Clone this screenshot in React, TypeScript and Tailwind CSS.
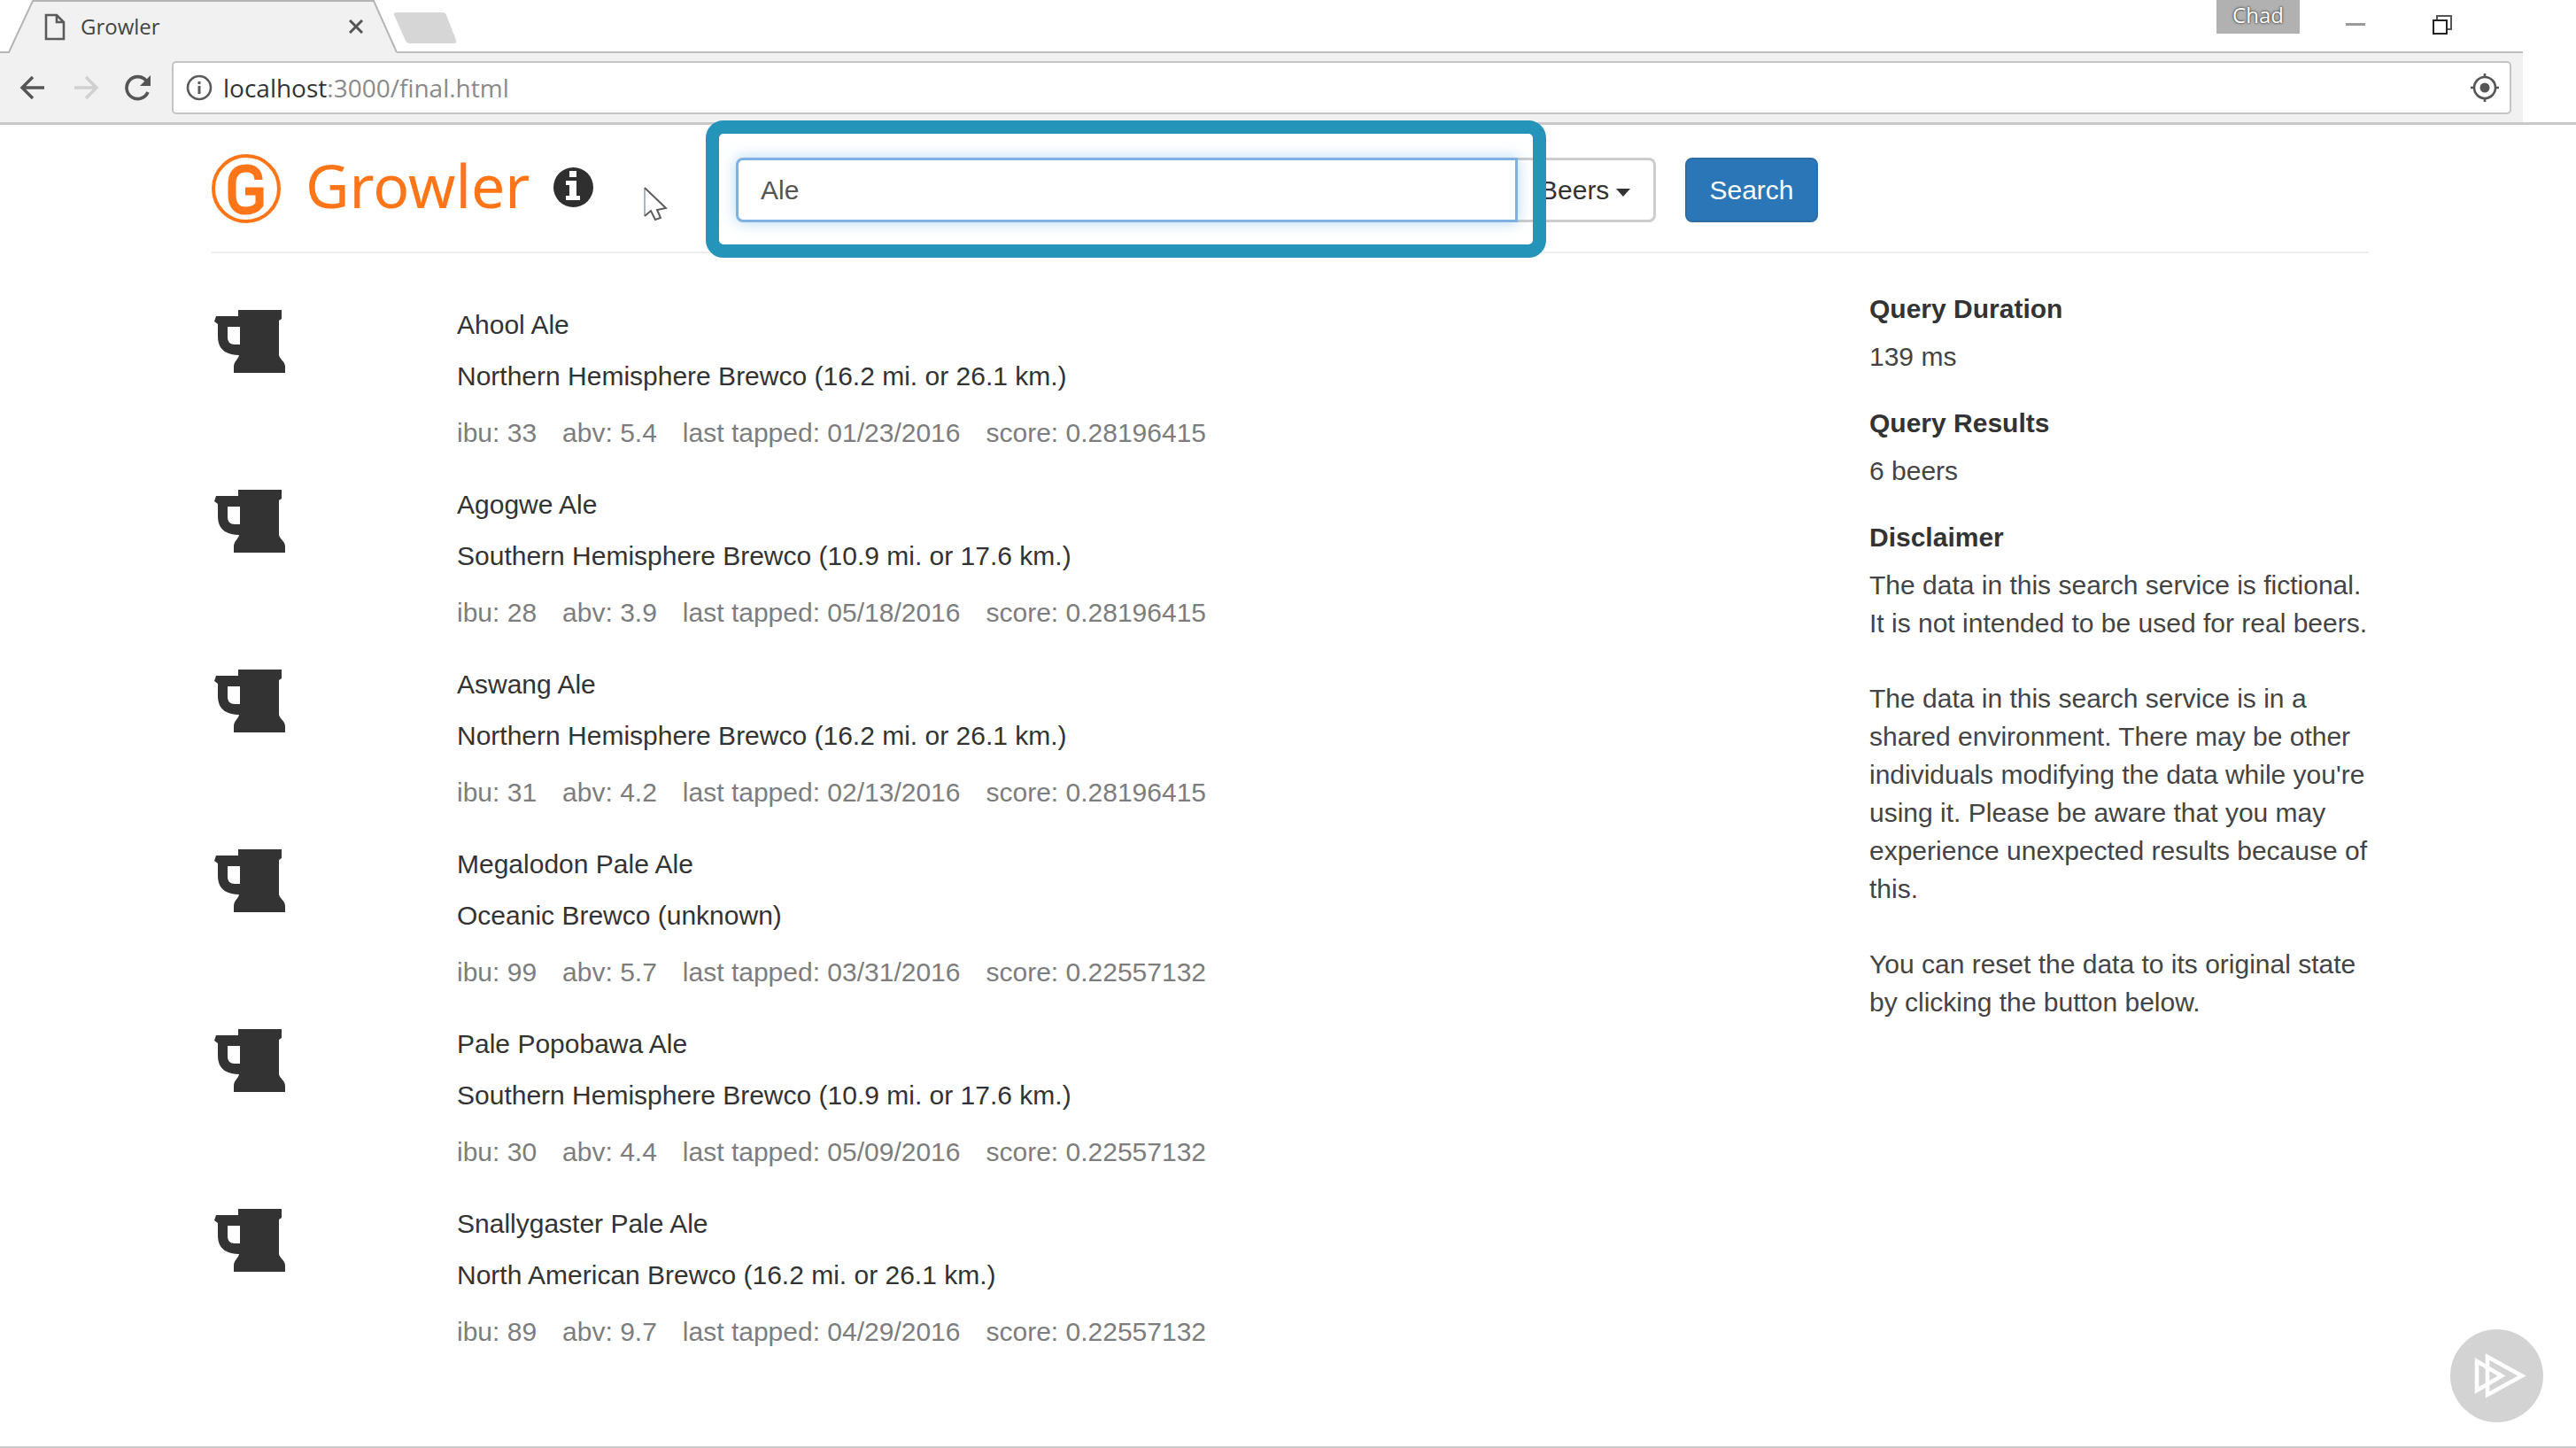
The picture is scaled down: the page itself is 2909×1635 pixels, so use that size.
import { useState } from "react";

type Beer = {
  name: string;
  brewer: string;
  ibu: number;
  abv: string;
  tapped: string;
  score: string;
};

const beers: Beer[] = [
  { name: "Ahool Ale", brewer: "Northern Hemisphere Brewco (16.2 mi. or 26.1 km.)", ibu: 33, abv: "5.4", tapped: "01/23/2016", score: "0.28196415" },
  { name: "Agogwe Ale", brewer: "Southern Hemisphere Brewco (10.9 mi. or 17.6 km.)", ibu: 28, abv: "3.9", tapped: "05/18/2016", score: "0.28196415" },
  { name: "Aswang Ale", brewer: "Northern Hemisphere Brewco (16.2 mi. or 26.1 km.)", ibu: 31, abv: "4.2", tapped: "02/13/2016", score: "0.28196415" },
  { name: "Megalodon Pale Ale", brewer: "Oceanic Brewco (unknown)", ibu: 99, abv: "5.7", tapped: "03/31/2016", score: "0.22557132" },
  { name: "Pale Popobawa Ale", brewer: "Southern Hemisphere Brewco (10.9 mi. or 17.6 km.)", ibu: 30, abv: "4.4", tapped: "05/09/2016", score: "0.22557132" },
  { name: "Snallygaster Pale Ale", brewer: "North American Brewco (16.2 mi. or 26.1 km.)", ibu: 89, abv: "9.7", tapped: "04/29/2016", score: "0.22557132" },
];

function MugIcon() {
  return (
    <svg viewBox="0 0 81 71" className="h-[71px] w-[81px] text-[#333]" fill="currentColor" aria-hidden="true">
      <path
        fillRule="evenodd"
        d="M27 0H76V10L73 12V51C74 56 80 58 80 64V71H22V64C22 58 27 56 28 51C14 51 4 45 4 30V16L0 13L2 7H27ZM15 19V31C15 36 18 39 23 39H29V19Z"
      />
    </svg>
  );
}

function LogoMark() {
  return (
    <svg viewBox="0 0 78 78" className="size-[78px] text-[#ff7518]" fill="none" stroke="currentColor" aria-hidden="true">
      <circle cx="39" cy="39" r="37" strokeWidth="4" />
      <path
        d="M53 29C53 20 47 16 39 16C28 16 23 23 23 33V46C23 57 28 64 38 64C46 64 51 61 54 57V42H38"
        strokeWidth="9"
      />
    </svg>
  );
}

function InfoIcon() {
  return (
    <svg viewBox="0 0 45 45" className="size-[45px]" aria-hidden="true">
      <circle cx="22.5" cy="22.5" r="22.5" fill="#2f2f2f" />
      <path d="M18 4H26V11H18ZM14 15H26V32H30V37H14V32H18V20H14Z" fill="#fff" />
    </svg>
  );
}

function Pointer() {
  return (
    <svg viewBox="0 0 28 40" className="mt-9 ml-14 h-10 w-7" aria-hidden="true">
      <path d="M2 2V34L9 28L14 38L20 36L16 27L26 25Z" fill="#fff" />
      <path d="M2 34V2" stroke="#a9b4c4" strokeWidth="2" />
      <path d="M2 2L26 25L16 27L20 36L14 38L9 28L2 34" fill="none" stroke="#5c5c5c" strokeWidth="2" />
    </svg>
  );
}

function TabStrip() {
  return (
    <div className="flex h-[60px] items-start pr-[60px]">
      <div className="relative h-[60px] w-[448px] shrink-0">
        <svg viewBox="0 0 448 60" className="absolute inset-0 h-[60px] w-[448px]" aria-hidden="true">
          <path d="M0 59H10L37 1H422L448 59V60H0Z" fill="#f1f1f1" />
          <path d="M0 0H37L10 59H0Z" fill="#fff" />
          <path d="M0 59H10L37 1H422L448 59" fill="none" stroke="#b5b5b5" strokeWidth="2" />
        </svg>
        <div className="relative flex h-[60px] items-center pl-[50px]">
          <svg viewBox="0 0 24 31" className="h-[31px] w-6" fill="none" stroke="#5a5a5a" strokeWidth="2.6" aria-hidden="true">
            <path d="M2 2H14L22 10V29H2ZM14 2V10H22" />
          </svg>
          <span className="ml-[17px] font-['Open_Sans',sans-serif] text-[24px] text-[#444]">Growler</span>
          <button type="button" aria-label="Close tab" className="ml-auto mr-[38px]">
            <svg viewBox="0 0 16 16" className="size-4" stroke="#555" strokeWidth="3" aria-hidden="true">
              <path d="M1 1L15 15M15 1L1 15" />
            </svg>
          </button>
        </div>
      </div>
      <div className="flex h-[60px] flex-1 items-start border-b-2 border-[#bdbdbd]">
        <button type="button" aria-label="New tab" className="-ml-1 mt-[14px]">
          <svg viewBox="0 0 72 36" className="h-9 w-[72px]" aria-hidden="true">
            <path d="M3 0H55Q59 0 60 3L71 31Q72 35 68 35H19Q15 35 14 32L1 3Q0 0 3 0Z" fill="#d6d6d6" />
          </svg>
        </button>
        <div className="ml-auto flex items-start pr-[79px]">
          <button
            type="button"
            className="h-[38px] w-[94px] bg-[#b1b1b1] pb-1 font-['Open_Sans',sans-serif] text-[24px] leading-[34px] text-white [text-shadow:0_0_3px_#333,0_0_2px_#555]"
          >
            Chad
          </button>
          <button type="button" aria-label="Minimize" className="mt-[26px] ml-[52px] h-[3px] w-[22px] bg-[#999]" />
          <button type="button" aria-label="Restore" className="mt-[16px] ml-[75px]">
            <svg viewBox="0 0 24 24" className="size-6" fill="none" aria-hidden="true">
              <path d="M6 6V2H22V17H17" stroke="#555" strokeWidth="2" />
              <path d="M2 7H17V22H2Z" stroke="#222" strokeWidth="2" />
            </svg>
          </button>
        </div>
      </div>
    </div>
  );
}

function Toolbar() {
  return (
    <div className="border-b-[3px] border-[#c9c9c9]">
      <div className="mr-[60px] flex h-[78px] items-center bg-[#f1f1f1] pr-[13px] pl-[22px]">
        <button type="button" aria-label="Back">
          <svg viewBox="0 0 30 28" className="h-7 w-[30px]" fill="none" stroke="#555" strokeWidth="3.4" aria-hidden="true">
            <path d="M28 14H3M15 2L3 14L15 26" />
          </svg>
        </button>
        <button type="button" aria-label="Forward" disabled className="ml-[30px]">
          <svg viewBox="0 0 30 28" className="h-7 w-[30px]" fill="none" stroke="#d0d0d0" strokeWidth="3.4" aria-hidden="true">
            <path d="M2 14H27M15 2L27 14L15 26" />
          </svg>
        </button>
        <button type="button" aria-label="Reload" className="ml-7">
          <svg viewBox="0 0 32 30" className="h-[30px] w-8" aria-hidden="true">
            <path d="M27 20A12.5 12.5 0 1 1 25 7" fill="none" stroke="#555" strokeWidth="3.6" />
            <path d="M30 1V13H18Z" fill="#555" />
          </svg>
        </button>
        <div className="ml-[22px] flex h-[60px] flex-1 items-center rounded-[5px] border-2 border-[#c4c4c4] bg-white pr-3 pl-[14px]">
          <svg viewBox="0 0 30 30" className="size-[30px]" fill="none" aria-hidden="true">
            <circle cx="15" cy="15" r="13" stroke="#5a5a5a" strokeWidth="2.6" />
            <path d="M15 13V22M15 8V11" stroke="#5a5a5a" strokeWidth="3" />
          </svg>
          <a href="#" className="ml-3 flex-1 font-['Open_Sans',sans-serif] text-[28px] text-[#8a8a8a]">
            <span className="text-[#333]">localhost</span>:3000/final.html
          </a>
          <button type="button" aria-label="Location">
            <svg viewBox="0 0 32 32" className="size-8" fill="none" stroke="#555" strokeWidth="2.6" aria-hidden="true">
              <circle cx="16" cy="16" r="12" />
              <circle cx="16" cy="16" r="5.5" fill="#555" stroke="none" />
              <path d="M16 0V5M16 27V32M0 16H5M27 16H32" />
            </svg>
          </button>
        </div>
      </div>
    </div>
  );
}

function SiteHeader() {
  const [query, setQuery] = useState("Ale");
  return (
    <header className="flex items-start border-b-2 border-[#eee] pt-[33px] pb-8">
      <div className="flex w-[592px] shrink-0 items-start">
        <LogoMark />
        <h1 className="ml-[28px] font-['Noto_Sans',sans-serif] text-[68px] leading-[70px] text-[#ff7518]">Growler</h1>
        <button type="button" aria-label="About" className="mt-[15px] ml-[27px]">
          <InfoIcon />
        </button>
        <Pointer />
      </div>
      <form className="mt-1 flex flex-1 items-start" onSubmit={(e) => e.preventDefault()}>
        <div className="relative z-10 w-[883px]">
          <input
            type="text"
            aria-label="Search beers"
            value={query}
            onChange={(e) => setQuery(e.target.value)}
            className="block h-[73px] w-full rounded-l-[8px] border-[3px] border-[#7fb2e2] bg-white px-[25px] text-[30px] text-[#555] shadow-[0_0_16px_rgba(102,175,233,0.5)] outline-none"
          />
          <div className="pointer-events-none absolute -top-[42px] -right-8 -bottom-10 -left-[34px] rounded-[20px] border-[15px] border-[#2494b9]" />
        </div>
        <div className="relative">
          <select
            aria-label="Search type"
            className="block h-[73px] w-[156px] appearance-none rounded-r-[8px] border-y-[3px] border-r-[3px] border-[#ccc] bg-white pl-[25px] text-[30px] text-[#333]"
          >
            <option>Beers</option>
          </select>
          <svg viewBox="0 0 16 9" className="pointer-events-none absolute top-[35px] right-[29px] h-[9px] w-4" aria-hidden="true">
            <path d="M0 0H16L8 9Z" fill="#333" />
          </svg>
        </div>
        <button type="submit" className="ml-[33px] h-[73px] w-[150px] rounded-[8px] border-2 border-[#2e6da4] bg-[#2b76b7] text-[30px] text-white">
          Search
        </button>
      </form>
    </header>
  );
}

function BeerRow({ beer }: { beer: Beer }) {
  return (
    <li className="flex h-[203px]">
      <div className="w-[277px] shrink-0 pt-[5px] pl-[3px]">
        <MugIcon />
      </div>
      <div className="text-[#333]">
        <div className="leading-[43px]">{beer.name}</div>
        <div className="mt-[15px] leading-[43px]">{beer.brewer}</div>
        <div className="mt-[21px] flex gap-[29px] leading-[43px] text-[#7d7d7d]">
          <span>ibu: {beer.ibu}</span>
          <span>abv: {beer.abv}</span>
          <span>last tapped: {beer.tapped}</span>
          <span>score: {beer.score}</span>
        </div>
      </div>
    </li>
  );
}

function Sidebar() {
  return (
    <aside className="-mt-[18px] w-[564px] shrink-0 leading-[43px] text-[#444]">
      <h2 className="mb-[11px] font-bold text-[#333]">Query Duration</h2>
      <p className="mb-8">139 ms</p>
      <h2 className="mb-[11px] font-bold text-[#333]">Query Results</h2>
      <p className="mb-8">6 beers</p>
      <h2 className="mb-[11px] font-bold text-[#333]">Disclaimer</h2>
      <p className="mb-[42px]">The data in this search service is fictional. It is not intended to be used for real beers.</p>
      <p className="mb-[42px]">
        The data in this search service is in a shared environment. There may be other individuals modifying the data
        while you're using it. Please be aware that you may experience unexpected results because of this.
      </p>
      <p>You can reset the data to its original state by clicking the button below.</p>
    </aside>
  );
}

export default function App() {
  return (
    <div className="relative flex min-h-screen flex-col border-b-2 border-[#ccc] bg-white font-['Liberation_Sans',Arial,sans-serif] text-[30px]">
      <TabStrip />
      <Toolbar />
      <div className="pr-[234px] pl-[239px]">
        <SiteHeader />
        <main className="flex items-start justify-between pt-[59px]">
          <ul>
            {beers.map((beer) => (
              <BeerRow key={beer.name} beer={beer} />
            ))}
          </ul>
          <Sidebar />
        </main>
      </div>
      <div className="absolute right-[37px] bottom-[27px]">
        <svg viewBox="0 0 105 105" className="size-[105px]" fill="none" aria-hidden="true">
          <circle cx="52.5" cy="52.5" r="52.5" fill="#d3d3d3" />
          <path d="M30 36V69L58 52.5Z M42 31V74L81 52.5Z" stroke="#fff" strokeWidth="4.5" />
        </svg>
      </div>
    </div>
  );
}
